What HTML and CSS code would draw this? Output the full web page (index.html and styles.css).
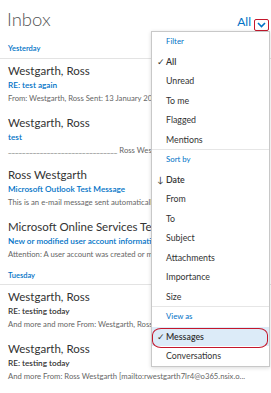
FILE: index.html
```html
<!DOCTYPE html>
<html lang="en">
<head>
  <meta charset="UTF-8">
  <meta name="viewport" content="width=device-width, initial-scale=1.0">
  <title>Inbox</title>
  <link rel="stylesheet" href="styles.css">
</head>
<body>
  <div class="app">
    <header class="top">
      <h1 class="title">Inbox</h1>
      <div class="filter-toggle">
        <span class="filter-label">All</span>
        <span class="chevron-box">
          <svg width="9" height="6" viewBox="0 0 9 6"><path d="M1 1 L4.5 4.5 L8 1" fill="none" stroke="#0072c6" stroke-width="1.6"/></svg>
        </span>
      </div>
    </header>

    <div class="group-label">Yesterday</div>

    <div class="msg">
      <div class="msg-from">Westgarth, Ross</div>
      <div class="msg-subject">RE: test again</div>
      <div class="msg-preview">From: Westgarth, Ross Sent: 13 January 2016 16:21 To: Westgarth, Ross</div>
    </div>

    <div class="msg">
      <div class="msg-from">Westgarth, Ross</div>
      <div class="msg-subject">test</div>
      <div class="msg-preview">_______________________________ Ross Westgarth</div>
    </div>

    <div class="msg">
      <div class="msg-from">Ross Westgarth</div>
      <div class="msg-subject">Microsoft Outlook Test Message</div>
      <div class="msg-preview">This is an e-mail message sent automatically by Microsoft Outlook</div>
    </div>

    <div class="msg">
      <div class="msg-from">Microsoft Online Services Team</div>
      <div class="msg-subject">New or modified user account information</div>
      <div class="msg-preview">Attention: A user account was created or modified</div>
    </div>

    <div class="group-label">Tuesday</div>

    <div class="msg">
      <div class="msg-from">Westgarth, Ross</div>
      <div class="msg-subject read">RE: testing today</div>
      <div class="msg-preview">And more and more From: Westgarth, Ross Sent: 12 January 2016</div>
    </div>

    <div class="msg">
      <div class="msg-from">Westgarth, Ross</div>
      <div class="msg-subject read"><span>RE: testing today</span><span class="msg-time">Tue 14:10</span></div>
      <div class="msg-preview">And more From: Ross Westgarth [mailto:rwestgarth7lr4@o365.nsix.o...</div>
    </div>

    <div class="menu">
      <div class="menu-section">
        <div class="menu-heading">Filter</div>
        <div class="menu-item selected"><span class="mark">✓</span>All</div>
        <div class="menu-item">Unread</div>
        <div class="menu-item">To me</div>
        <div class="menu-item">Flagged</div>
        <div class="menu-item">Mentions</div>
      </div>
      <div class="menu-section">
        <div class="menu-heading">Sort by</div>
        <div class="menu-item selected"><span class="mark">↓</span>Date</div>
        <div class="menu-item">From</div>
        <div class="menu-item">To</div>
        <div class="menu-item">Subject</div>
        <div class="menu-item">Attachments</div>
        <div class="menu-item">Importance</div>
        <div class="menu-item">Size</div>
      </div>
      <div class="menu-section">
        <div class="menu-heading">View as</div>
        <div class="menu-item selected highlighted"><span class="mark">✓</span>Messages</div>
        <div class="menu-item">Conversations</div>
      </div>
    </div>
  </div>
</body>
</html>
```

FILE: styles.css
```css
* {
  box-sizing: border-box;
}

body {
  margin: 0;
  font-family: Lato, 'Open Sans', sans-serif;
  background: #fff;
  color: #333;
}

.app {
  position: relative;
  width: 271px;
  height: 393px;
  overflow: hidden;
}

.top {
  display: flex;
  justify-content: space-between;
  align-items: baseline;
  height: 40px;
  padding: 7px 2px 0 7px;
}

.title {
  margin: 0;
  font-size: 18.5px;
  line-height: 24px;
  font-weight: 300;
  color: #555;
}

.filter-toggle {
  display: flex;
  align-items: baseline;
  gap: 3px;
}

.filter-label {
  font-size: 12px;
  color: #0072c6;
}

.chevron-box {
  display: flex;
  align-items: center;
  justify-content: center;
  width: 15px;
  height: 12px;
  border: 1.5px solid #c4172c;
  border-radius: 2px;
  transform: translateY(2px);
}

.group-label {
  padding: 2px 8px 2.5px;
  font-size: 7.5px;
  line-height: 13px;
  font-weight: 600;
  color: #0072c6;
  border-bottom: 1px solid #e3e3e3;
}

.msg {
  padding: 4px 0 6px 8px;
  white-space: nowrap;
}

.msg-from {
  font-size: 11.5px;
  line-height: 16px;
  color: #333;
}

.msg-subject {
  display: flex;
  justify-content: space-between;
  padding-right: 3px;
  font-size: 8.2px;
  line-height: 13px;
  font-weight: 600;
  color: #0072c6;
}

.msg-subject.read {
  color: #333;
}

.msg-time {
  font-weight: 400;
  font-size: 7.7px;
  color: #666;
}

.msg-preview {
  font-size: 7.7px;
  line-height: 13px;
  color: #666;
}

.menu {
  position: absolute;
  left: 151px;
  top: 31px;
  width: 119px;
  background: #fff;
  border: 1px solid #c8c8c8;
  box-shadow: 0 1px 4px rgba(0, 0, 0, 0.15);
  z-index: 2;
}

.menu-section + .menu-section {
  border-top: 1px solid #e6e6e6;
}

.menu-heading,
.menu-item {
  position: relative;
  height: 19.5px;
  padding-left: 14px;
  font-size: 8.8px;
  line-height: 19.5px;
  color: #333;
}

.menu-heading {
  font-size: 7.8px;
  color: #0072c6;
}

.menu-item.selected {
  font-weight: 600;
}

.mark {
  position: absolute;
  left: 5px;
  font-weight: 400;
}

.menu-item.highlighted {
  background: #dcebf8;
}

.menu-item.highlighted::after {
  content: '';
  position: absolute;
  inset: 1px 1px -2px 0;
  border: 1.5px solid #c4172c;
  border-radius: 9px / 7px;
}
```
